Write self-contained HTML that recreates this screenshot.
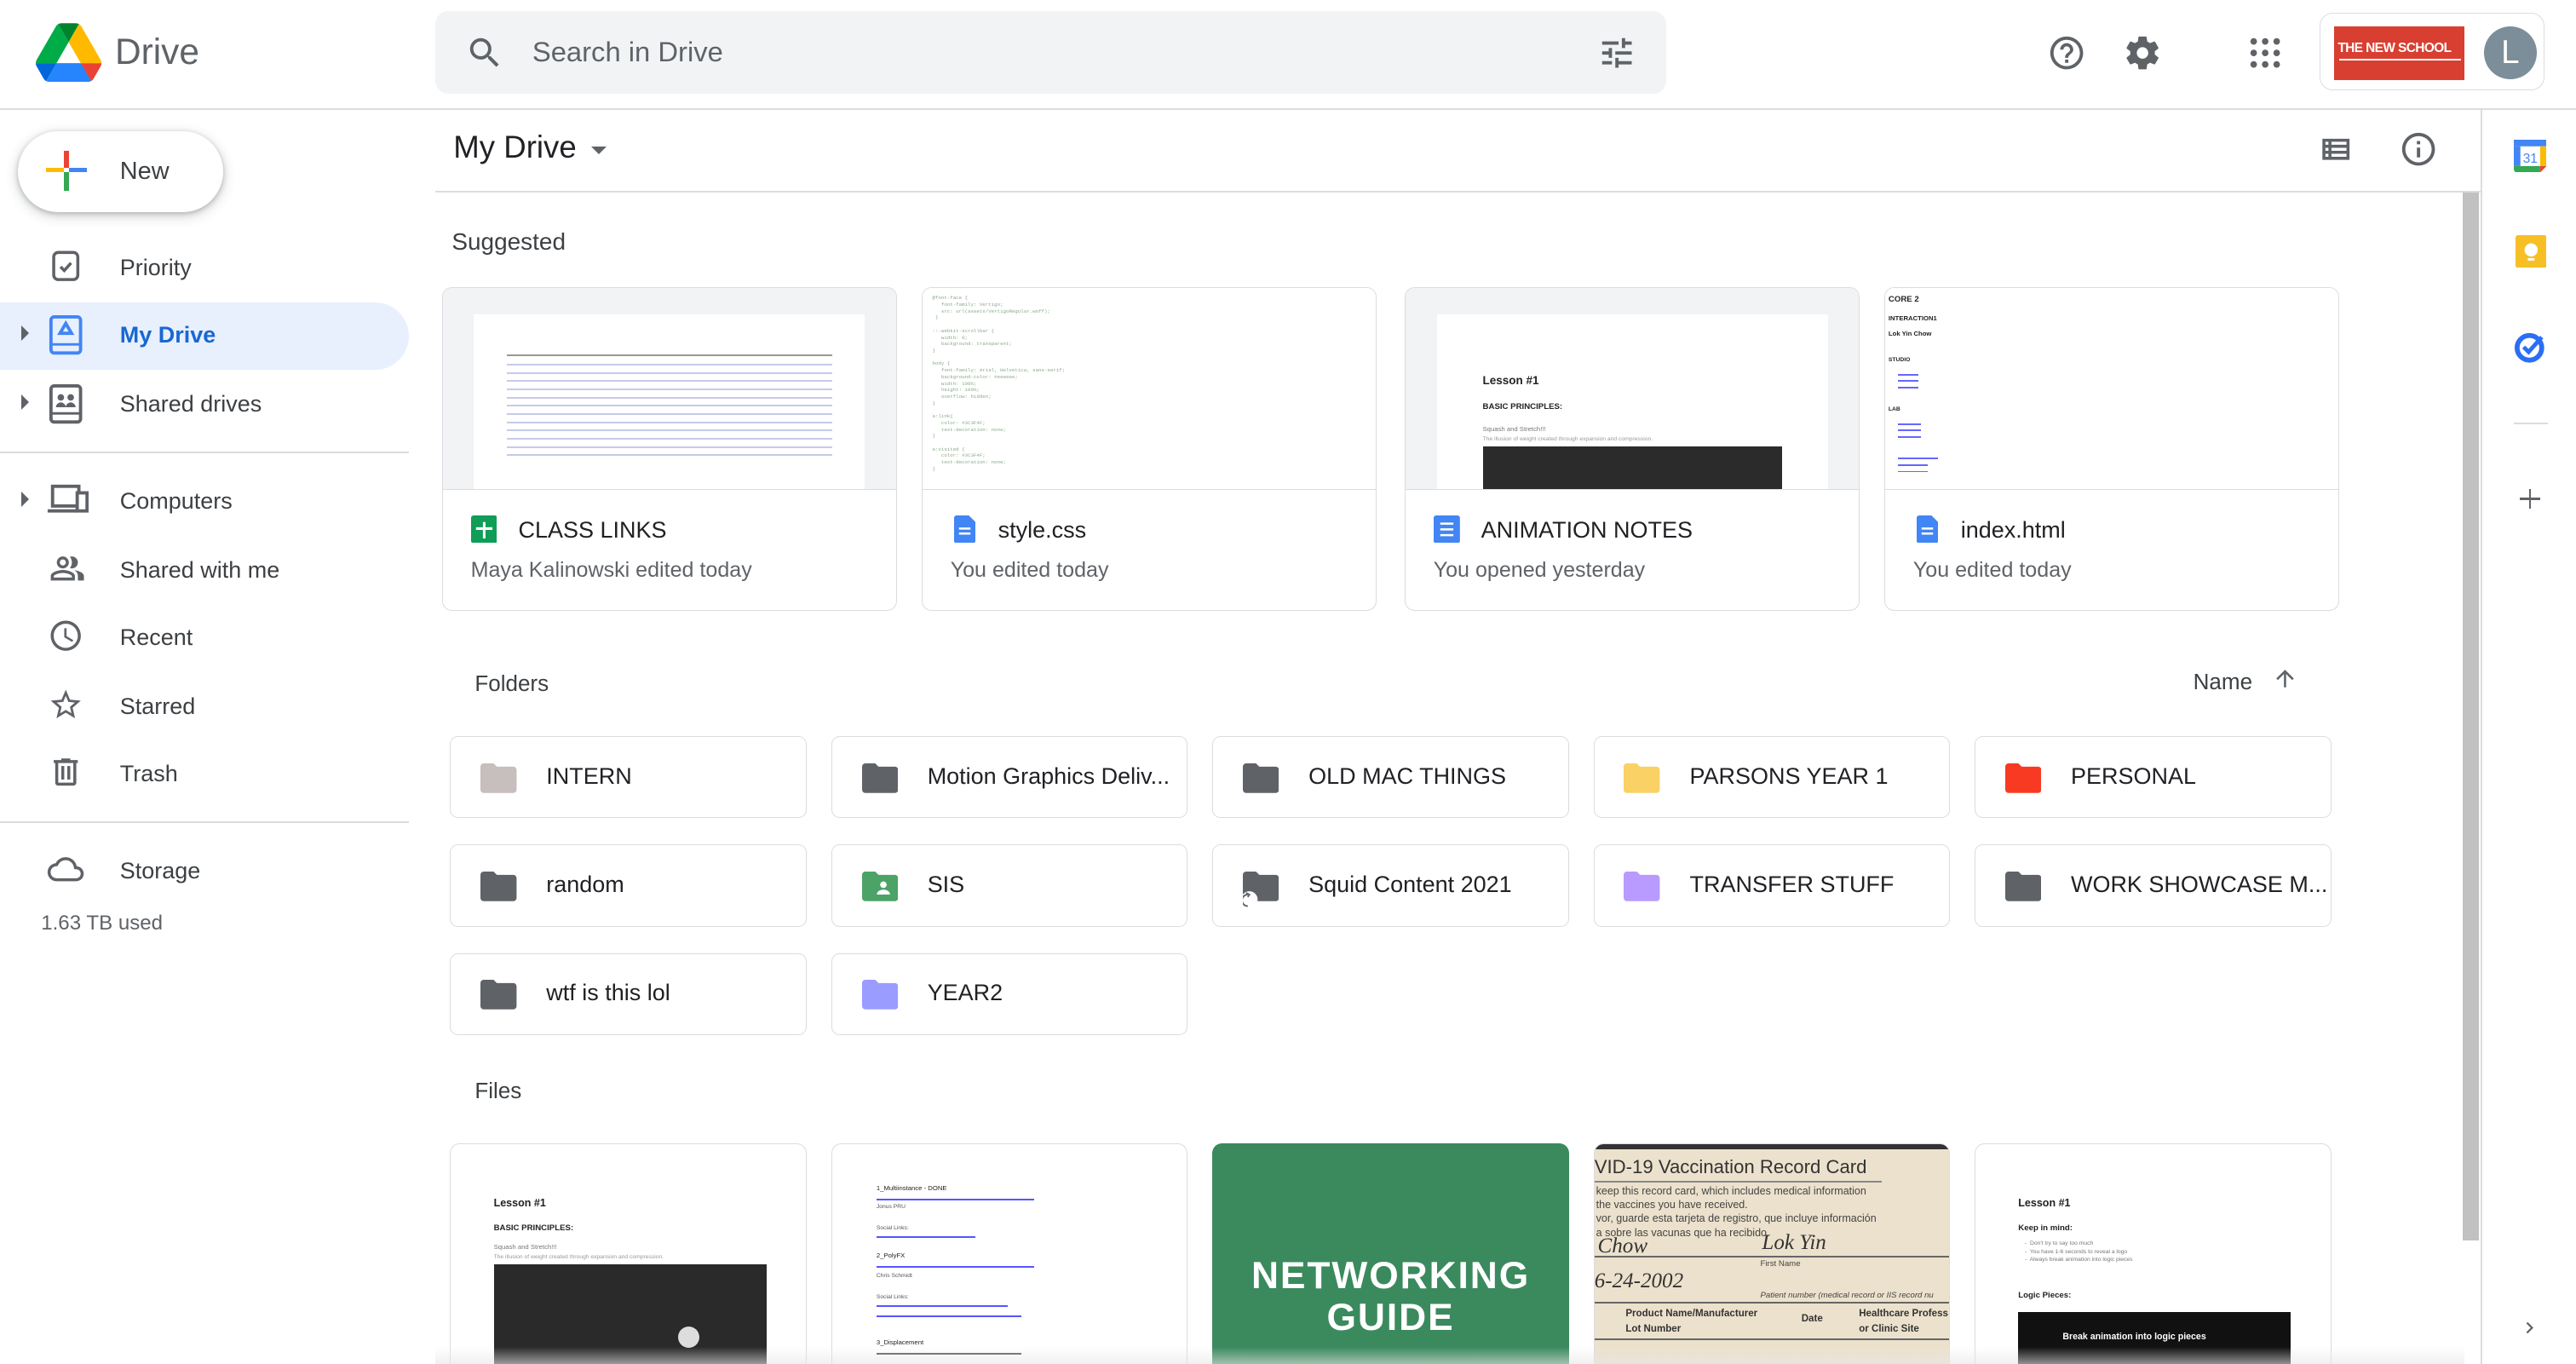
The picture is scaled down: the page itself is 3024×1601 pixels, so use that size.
<!DOCTYPE html>
<html><head><meta charset="utf-8">
<style>
html,body{margin:0;padding:0;background:#fff;overflow:hidden}
body{width:1568px;height:830px;zoom:1.928571;position:relative;font-family:"Liberation Sans",Arial,sans-serif;color:#3c4043}
.a{position:absolute}
.t{position:absolute;white-space:nowrap}
.nav{position:absolute;left:73px;font-size:14px;color:#3c4043}
.ic{position:absolute}
.card{position:absolute;top:175px;width:276px;height:196px;border:1px solid #dadce0;border-radius:6px;overflow:hidden;background:#fff}
.card .pv{position:absolute;left:0;top:0;right:0;height:122px;background:#f1f3f4;border-bottom:1px solid #dadce0;overflow:hidden}
.card .nm{position:absolute;left:46px;top:139px;font-size:14px;color:#202124}
.card .sb{position:absolute;left:17px;top:164px;font-size:13px;color:#5f6368}
.fd{position:absolute;width:216px;height:49px;border:1px solid #dadce0;border-radius:5px;background:#fff}
.fd .n{position:absolute;left:58px;top:16px;font-size:14px;color:#202124;font-weight:500}
.fd svg{position:absolute;left:18px;top:16px}
.fl{position:absolute;top:696px;width:216px;height:140px;border:1px solid #dadce0;border-radius:6px;overflow:hidden;background:#fff}
.doc{position:absolute;background:#fff}
.ln{position:absolute;height:1px;background:#c5cbe8}
</style></head><body>
<!-- header -->
<svg class="ic" style="left:22px;top:14px" width="40" height="36" viewBox="0 0 87.3 78"><path d="m6.6 66.85 3.85 6.65c.8 1.4 1.95 2.5 3.3 3.3l13.75-23.8h-27.5c0 1.55.4 3.1 1.2 4.5z" fill="#0066da"/><path d="m43.65 25-13.75-23.8c-1.35.8-2.5 1.9-3.3 3.3l-25.4 44a9.06 9.06 0 0 0 -1.2 4.5h27.5z" fill="#00ac47"/><path d="m73.55 76.8c1.35-.8 2.5-1.9 3.3-3.3l1.6-2.75 7.65-13.25c.8-1.4 1.2-2.95 1.2-4.5h-27.502l5.852 11.5z" fill="#ea4335"/><path d="m43.65 25 13.75-23.8c-1.35-.8-2.9-1.2-4.5-1.2h-18.5c-1.6 0-3.15.45-4.5 1.2z" fill="#00832d"/><path d="m59.8 53h-32.3l-13.75 23.8c1.35.8 2.9 1.2 4.5 1.2h50.8c1.6 0 3.15-.45 4.5-1.2z" fill="#2684fc"/><path d="m73.4 26.5-12.7-22c-.8-1.4-1.95-2.5-3.3-3.3l-13.75 23.8 16.15 28h27.45c0-1.55-.4-3.1-1.2-4.5z" fill="#ffba00"/></svg>
<div class="t" style="left:70px;top:19px;font-size:22px;color:#5f6368">Drive</div>
<div class="a" style="left:265px;top:7px;width:749px;height:50px;background:#f1f3f4;border-radius:8px"></div>
<svg class="ic" style="left:283px;top:20px" width="24" height="24" viewBox="0 0 24 24"><path fill="#5f6368" d="M15.5 14h-.79l-.28-.27A6.47 6.47 0 0 0 16 9.5 6.5 6.5 0 1 0 9.5 16c1.61 0 3.09-.59 4.23-1.57l.27.28v.79l5 4.99L20.49 19l-4.99-5zm-6 0C7.01 14 5 11.99 5 9.5S7.01 5 9.5 5 14 7.01 14 9.5 11.99 14 9.5 14z"/></svg>
<div class="t" style="left:324px;top:22px;font-size:17px;color:#5f6368">Search in Drive</div>
<svg class="ic" style="left:972px;top:20px" width="24" height="24" viewBox="0 0 24 24"><path fill="#5f6368" d="M3 17v2h6v-2H3zM3 5v2h10V5H3zm10 16v-2h8v-2h-8v-2h-2v6h2zM7 9v2H3v2h4v2h2V9H7zm14 4v-2H11v2h10zm-6-4h2V7h4V5h-4V3h-2v6z"/></svg>
<svg class="ic" style="left:1246px;top:20px" width="24" height="24" viewBox="0 0 24 24"><path fill="#5f6368" d="M11 18h2v-2h-2v2zm1-16C6.48 2 2 6.48 2 12s4.48 10 10 10 10-4.48 10-10S17.52 2 12 2zm0 18c-4.41 0-8-3.59-8-8s3.59-8 8-8 8 3.59 8 8-3.59 8-8 8zm0-14c-2.21 0-4 1.79-4 4h2c0-1.1.9-2 2-2s2 .9 2 2c0 2-3 1.75-3 5h2c0-2.25 3-2.5 3-5 0-2.21-1.79-4-4-4z"/></svg>
<svg class="ic" style="left:1292px;top:20px" width="24" height="24" viewBox="0 0 24 24"><path fill="#5f6368" d="M19.43 12.98c.04-.32.07-.64.07-.98s-.03-.66-.07-.98l2.11-1.65c.19-.15.24-.42.12-.64l-2-3.46c-.12-.22-.39-.3-.61-.22l-2.49 1c-.52-.4-1.08-.73-1.69-.98l-.38-2.65A.49.49 0 0 0 14 2h-4c-.25 0-.46.18-.49.42l-.38 2.65c-.61.25-1.17.59-1.69.98l-2.49-1c-.23-.09-.49 0-.61.22l-2 3.46c-.13.22-.07.49.12.64l2.11 1.65c-.04.32-.07.65-.07.98s.03.66.07.98l-2.11 1.65c-.19.15-.24.42-.12.64l2 3.46c.12.22.39.3.61.22l2.49-1c.52.4 1.08.73 1.69.98l.38 2.65c.03.24.24.42.49.42h4c.25 0 .46-.18.49-.42l.38-2.65c.61-.25 1.17-.59 1.69-.98l2.49 1c.23.09.49 0 .61-.22l2-3.46c.12-.22.07-.49-.12-.64l-2.11-1.65zM12 15.5c-1.93 0-3.5-1.57-3.5-3.5s1.57-3.5 3.5-3.5 3.5 1.57 3.5 3.5-1.57 3.5-3.5 3.5z"/></svg>
<svg class="ic" style="left:1367px;top:20px" width="24" height="24" viewBox="0 0 24 24"><g fill="#5f6368"><circle cx="5" cy="5" r="2"/><circle cx="12" cy="5" r="2"/><circle cx="19" cy="5" r="2"/><circle cx="5" cy="12" r="2"/><circle cx="12" cy="12" r="2"/><circle cx="19" cy="12" r="2"/><circle cx="5" cy="19" r="2"/><circle cx="12" cy="19" r="2"/><circle cx="19" cy="19" r="2"/></g></svg>
<div class="a" style="left:1412px;top:8px;width:136px;height:46px;border:1px solid #dadce0;border-radius:8px"></div>
<div class="a" style="left:1421px;top:16px;width:79px;height:33px;background:#d83f31"></div>
<div class="t" style="left:1423px;top:25px;font-size:8px;font-weight:bold;color:#fff;letter-spacing:-0.3px">THE NEW SCHOOL</div>
<div class="a" style="left:1424px;top:36px;width:74px;height:1px;background:#fff"></div>
<div class="a" style="left:1512px;top:16px;width:32px;height:32px;border-radius:50%;background:#7b8e99;color:#fff;font-size:20px;text-align:center;line-height:32px">L</div>
<div class="a" style="left:0;top:66px;width:1568px;height:1px;background:#dadce0"></div>

<!-- sidebar -->
<div class="a" style="left:11px;top:80px;width:125px;height:49px;border-radius:25px;background:#fff;box-shadow:0 1px 3px rgba(60,64,67,.3),0 2px 6px 2px rgba(60,64,67,.15)"></div>
<div class="a" style="left:39px;top:92px;width:3px;height:10px;background:#ea4335"></div>
<div class="a" style="left:39px;top:105px;width:3px;height:11px;background:#34a853"></div>
<div class="a" style="left:28px;top:102px;width:11px;height:3px;background:#fbbc04"></div>
<div class="a" style="left:42px;top:102px;width:11px;height:3px;background:#4285f4"></div>
<div class="t" style="left:73px;top:96px;font-size:15px;color:#3c4043;font-weight:500">New</div>

<div class="a" style="left:0;top:184px;width:249px;height:41px;background:#e8f0fe;border-radius:0 21px 21px 0"></div>
<svg class="ic" style="left:29px;top:151px" width="22" height="22" viewBox="0 0 24 24"><rect x="4" y="3" width="16" height="18" rx="3" fill="none" stroke="#5f6368" stroke-width="2"/><path d="M8.5 12.5l2.5 2.5 4.5-5" fill="none" stroke="#5f6368" stroke-width="2"/></svg>
<div class="nav" style="top:155px">Priority</div>
<div class="a" style="left:13px;top:198px;width:0;height:0;border-top:5px solid transparent;border-bottom:5px solid transparent;border-left:5px solid #5f6368"></div>
<svg class="ic" style="left:29px;top:192px" width="22" height="24" viewBox="0 0 22 24"><rect x="2" y="1" width="18" height="22" rx="2" fill="none" stroke="#4285f4" stroke-width="2"/><rect x="2" y="17" width="18" height="1.5" fill="#4285f4"/><path d="M11 5l3.5 6h-7z" fill="none" stroke="#4285f4" stroke-width="2"/></svg>
<div class="nav" style="top:196px;color:#1967d2;font-weight:bold">My Drive</div>
<div class="a" style="left:13px;top:240px;width:0;height:0;border-top:5px solid transparent;border-bottom:5px solid transparent;border-left:5px solid #5f6368"></div>
<svg class="ic" style="left:29px;top:234px" width="22" height="24" viewBox="0 0 22 24"><rect x="2" y="1" width="18" height="22" rx="2" fill="none" stroke="#5f6368" stroke-width="2"/><rect x="2" y="17" width="18" height="1.5" fill="#5f6368"/><circle cx="8" cy="8" r="2" fill="#5f6368"/><circle cx="14" cy="8" r="2" fill="#5f6368"/><path d="M5 14c0-2 2-3 3-3s3 1 3 3zM11 14c0-2 2-3 3-3s3 1 3 3z" fill="#5f6368"/></svg>
<div class="nav" style="top:238px">Shared drives</div>
<div class="a" style="left:0;top:275px;width:249px;height:1px;background:#dadce0"></div>
<div class="a" style="left:13px;top:299px;width:0;height:0;border-top:5px solid transparent;border-bottom:5px solid transparent;border-left:5px solid #5f6368"></div>
<svg class="ic" style="left:28px;top:293px" width="26" height="22" viewBox="0 0 26 22"><rect x="4" y="3" width="16" height="12" fill="none" stroke="#5f6368" stroke-width="2"/><path d="M1 18h18" stroke="#5f6368" stroke-width="2"/><rect x="19" y="7" width="6" height="11" fill="#fff" stroke="#5f6368" stroke-width="2"/></svg>
<div class="nav" style="top:297px">Computers</div>
<svg class="ic" style="left:28px;top:335px" width="26" height="22" viewBox="0 0 24 24"><path fill="#5f6368" d="M16.67 13.13C18.04 14.06 19 15.32 19 17v3h4v-3c0-2.18-3.57-3.47-6.33-3.87zM15 12c2.21 0 4-1.79 4-4s-1.79-4-4-4c-.47 0-.91.1-1.33.24a5.98 5.98 0 0 1 0 7.52c.42.14.86.24 1.33.24zm-6 0c2.21 0 4-1.79 4-4s-1.79-4-4-4-4 1.79-4 4 1.79 4 4 4zm0-6c1.1 0 2 .9 2 2s-.9 2-2 2-2-.9-2-2 .9-2 2-2zm0 7c-2.67 0-8 1.34-8 4v3h16v-3c0-2.66-5.33-4-8-4zm6 5H3v-.99C3.2 16.29 6.3 15 9 15s5.8 1.29 6 2v1z"/></svg>
<div class="nav" style="top:339px">Shared with me</div>
<svg class="ic" style="left:29px;top:376px" width="22" height="22" viewBox="0 0 24 24"><path fill="#5f6368" d="M11.99 2C6.47 2 2 6.48 2 12s4.47 10 9.99 10C17.52 22 22 17.52 22 12S17.52 2 11.99 2zM12 20c-4.42 0-8-3.58-8-8s3.58-8 8-8 8 3.58 8 8-3.58 8-8 8zm.5-13H11v6l5.25 3.15.75-1.23-4.5-2.67z"/></svg>
<div class="nav" style="top:380px">Recent</div>
<svg class="ic" style="left:29px;top:418px" width="22" height="22" viewBox="0 0 24 24"><path fill="#5f6368" d="M22 9.24l-7.19-.62L12 2 9.19 8.63 2 9.24l5.46 4.73L5.82 21 12 17.27 18.18 21l-1.63-7.03L22 9.24zM12 15.4l-3.76 2.27 1-4.28-3.32-2.88 4.38-.38L12 6.1l1.71 4.04 4.38.38-3.32 2.88 1 4.28L12 15.4z"/></svg>
<div class="nav" style="top:422px">Starred</div>
<svg class="ic" style="left:29px;top:459px" width="22" height="22" viewBox="0 0 24 24"><path fill="#5f6368" d="M15 4V3H9v1H4v2h1v13c0 1.1.9 2 2 2h10c1.1 0 2-.9 2-2V6h1V4h-5zm2 15H7V6h10v13zM9 8h2v9H9zm4 0h2v9h-2z"/></svg>
<div class="nav" style="top:463px">Trash</div>
<div class="a" style="left:0;top:500px;width:249px;height:1px;background:#dadce0"></div>
<svg class="ic" style="left:27px;top:518px" width="26" height="22" viewBox="0 0 24 24"><path fill="#5f6368" d="M19.35 10.04A7.49 7.49 0 0 0 12 4C9.11 4 6.6 5.64 5.35 8.04A5.994 5.994 0 0 0 0 14c0 3.31 2.69 6 6 6h13c2.76 0 5-2.24 5-5 0-2.64-2.05-4.78-4.65-4.96zM19 18H6c-2.21 0-4-1.79-4-4 0-2.05 1.53-3.76 3.56-3.97l1.07-.11.5-.95A5.469 5.469 0 0 1 12 6c2.62 0 4.88 1.86 5.39 4.43l.3 1.5 1.53.11A2.98 2.98 0 0 1 22 15c0 1.65-1.35 3-3 3z"/></svg>
<div class="nav" style="top:522px">Storage</div>
<div class="t" style="left:25px;top:555px;font-size:12.5px;color:#5f6368">1.63 TB used</div>

<!-- main header -->
<div class="t" style="left:276px;top:79px;font-size:19px;color:#202124">My Drive</div>
<div class="a" style="left:360px;top:89px;width:0;height:0;border-left:5px solid transparent;border-right:5px solid transparent;border-top:5px solid #5f6368"></div>
<svg class="ic" style="left:1411px;top:80px" width="22" height="22" viewBox="0 0 24 24"><path fill="#5f6368" d="M3 5v14h18V5H3zm4 2v2H5V7h2zm-2 6v-2h2v2H5zm0 2h2v2H5v-2zm14 2H9v-2h10v2zm0-4H9v-2h10v2zm0-4H9V7h10v2z"/></svg>
<svg class="ic" style="left:1460px;top:79px" width="24" height="24" viewBox="0 0 24 24"><path fill="#5f6368" d="M11 7h2v2h-2zm0 4h2v6h-2zm1-9C6.48 2 2 6.48 2 12s4.48 10 10 10 10-4.48 10-10S17.52 2 12 2zm0 18c-4.41 0-8-3.59-8-8s3.59-8 8-8 8 3.59 8 8-3.59 8-8 8z"/></svg>
<div class="a" style="left:265px;top:116px;width:1245px;height:1px;background:#dadce0"></div>
<div class="a" style="left:1510px;top:66px;width:1px;height:764px;background:#dadce0"></div>
<div class="a" style="left:1499px;top:117px;width:10px;height:638px;background:#c1c1c1"></div>

<div class="t" style="left:275px;top:139px;font-size:14.5px;color:#3c4043">Suggested</div>

<!-- suggested cards -->
<div class="card" style="left:269px">
  <div class="pv"><div class="doc" style="left:19px;top:16px;width:238px;height:110px">
    <div class="ln" style="left:20px;top:24px;width:198px;background:#999"></div>
    <div class="ln" style="left:20px;top:30px;width:198px"></div><div class="ln" style="left:20px;top:35px;width:198px"></div><div class="ln" style="left:20px;top:40px;width:198px"></div><div class="ln" style="left:20px;top:45px;width:198px"></div><div class="ln" style="left:20px;top:50px;width:198px"></div><div class="ln" style="left:20px;top:55px;width:198px"></div><div class="ln" style="left:20px;top:60px;width:198px"></div><div class="ln" style="left:20px;top:65px;width:198px"></div><div class="ln" style="left:20px;top:70px;width:198px"></div><div class="ln" style="left:20px;top:75px;width:198px"></div><div class="ln" style="left:20px;top:80px;width:198px"></div><div class="ln" style="left:20px;top:85px;width:198px"></div>
  </div></div>
  <svg class="ic" style="left:17px;top:138px" width="16" height="17" viewBox="0 0 16 17"><rect width="16" height="17" rx="1.5" fill="#0f9d58"/><path d="M3 8h10M8 4v10" stroke="#fff" stroke-width="1.6"/></svg>
  <div class="nm">CLASS LINKS</div><div class="sb">Maya Kalinowski edited today</div>
</div>
<div class="card" style="left:561px">
  <div class="pv" style="background:#fff"><div style="position:absolute;left:6px;top:4px;font:3px 'Liberation Mono',monospace;color:#8a8;line-height:4px;white-space:pre">@font-face {
   font-family: Vertigo;
   src: url(assets/VertigoRegular.woff);
 }

::-webkit-scrollbar {
   width: 0;
   background: transparent;
}

body {
   font-family: Arial, Helvetica, sans-serif;
   background-color: #eeeeee;
   width: 100%;
   height: 100%;
   overflow: hidden;
}

a:link{
   color: #3C3F4F;
   text-decoration: none;
}

a:visited {
   color: #3C3F4F;
   text-decoration: none;
}</div></div>
  <svg class="ic" style="left:19px;top:138px" width="13" height="17" viewBox="0 0 13 17"><path d="M0 1.5A1.5 1.5 0 0 1 1.5 0H9l4 4v11.5A1.5 1.5 0 0 1 11.5 17h-10A1.5 1.5 0 0 1 0 15.5z" fill="#4285f4"/><path d="M3 8h7M3 11h7" stroke="#fff" stroke-width="1.3"/></svg>
  <div class="nm">style.css</div><div class="sb">You edited today</div>
</div>
<div class="card" style="left:855px">
  <div class="pv"><div class="doc" style="left:19px;top:16px;width:238px;height:110px">
    <div class="t" style="left:28px;top:36px;font-size:7px;font-weight:bold;color:#222">Lesson #1</div>
    <div class="t" style="left:28px;top:53px;font-size:5px;font-weight:bold;color:#222">BASIC PRINCIPLES:</div>
    <div class="t" style="left:28px;top:67px;font-size:4px;color:#777">Squash and Stretch!!!</div>
    <div class="t" style="left:28px;top:74px;font-size:3.5px;color:#999">The illusion of weight created through expansion and compression.</div>
    <div class="a" style="left:28px;top:80px;width:182px;height:30px;background:#2b2b2b"></div>
  </div></div>
  <svg class="ic" style="left:17px;top:138px" width="16" height="17" viewBox="0 0 16 17"><rect width="16" height="17" rx="1.5" fill="#4285f4"/><path d="M4 5h8M4 8.5h8M4 12h8" stroke="#fff" stroke-width="1.3"/></svg>
  <div class="nm">ANIMATION NOTES</div><div class="sb">You opened yesterday</div>
</div>
<div class="card" style="left:1147px">
  <div class="pv" style="background:#fff">
    <div class="t" style="left:2px;top:4px;font-size:5px;font-weight:bold;color:#222">CORE 2</div>
    <div class="t" style="left:2px;top:16px;font-size:4px;font-weight:bold;color:#222">INTERACTION1</div>
    <div class="t" style="left:2px;top:25px;font-size:4px;font-weight:bold;color:#222">Lok Yin Chow</div>
    <div class="t" style="left:2px;top:42px;font-size:3.5px;font-weight:bold;color:#222">STUDIO</div>
    <div class="ln" style="left:8px;top:52px;width:12px;background:#66f"></div><div class="ln" style="left:8px;top:56px;width:12px;background:#66f"></div><div class="ln" style="left:8px;top:60px;width:12px;background:#66f"></div>
    <div class="t" style="left:2px;top:72px;font-size:3.5px;font-weight:bold;color:#222">LAB</div>
    <div class="ln" style="left:8px;top:82px;width:14px;background:#66f"></div><div class="ln" style="left:8px;top:86px;width:14px;background:#66f"></div><div class="ln" style="left:8px;top:90px;width:14px;background:#66f"></div>
    <div class="ln" style="left:8px;top:103px;width:24px;background:#66f"></div><div class="ln" style="left:8px;top:107px;width:18px;background:#66f"></div><div class="ln" style="left:8px;top:111px;width:18px;background:#66f"></div>
  </div>
  <svg class="ic" style="left:19px;top:138px" width="13" height="17" viewBox="0 0 13 17"><path d="M0 1.5A1.5 1.5 0 0 1 1.5 0H9l4 4v11.5A1.5 1.5 0 0 1 11.5 17h-10A1.5 1.5 0 0 1 0 15.5z" fill="#4285f4"/><path d="M3 8h7M3 11h7" stroke="#fff" stroke-width="1.3"/></svg>
  <div class="nm">index.html</div><div class="sb">You edited today</div>
</div>

<!-- folders -->
<div class="t" style="left:289px;top:408px;font-size:13.5px;color:#3c4043">Folders</div>
<div class="t" style="left:1335px;top:407px;font-size:13.5px;color:#3c4043">Name</div>
<svg class="ic" style="left:1383px;top:405px" width="16" height="16" viewBox="0 0 24 24"><path fill="#5f6368" d="M4 12l1.41 1.41L11 7.83V20h2V7.83l5.58 5.59L20 12l-8-8-8 8z"/></svg>

<div class="fd" style="left:274px;top:448px"><svg width="22" height="18" viewBox="0 0 22 18"><path d="M0 2a2 2 0 0 1 2-2h6l2 2h10a2 2 0 0 1 2 2v12a2 2 0 0 1-2 2H2a2 2 0 0 1-2-2z" fill="#c7bebe"/></svg><div class="n">INTERN</div></div>
<div class="fd" style="left:506px;top:448px"><svg width="22" height="18" viewBox="0 0 22 18"><path d="M0 2a2 2 0 0 1 2-2h6l2 2h10a2 2 0 0 1 2 2v12a2 2 0 0 1-2 2H2a2 2 0 0 1-2-2z" fill="#5f6368"/></svg><div class="n">Motion Graphics Deliv...</div></div>
<div class="fd" style="left:738px;top:448px"><svg width="22" height="18" viewBox="0 0 22 18"><path d="M0 2a2 2 0 0 1 2-2h6l2 2h10a2 2 0 0 1 2 2v12a2 2 0 0 1-2 2H2a2 2 0 0 1-2-2z" fill="#5f6368"/></svg><div class="n">OLD MAC THINGS</div></div>
<div class="fd" style="left:970px;top:448px"><svg width="22" height="18" viewBox="0 0 22 18"><path d="M0 2a2 2 0 0 1 2-2h6l2 2h10a2 2 0 0 1 2 2v12a2 2 0 0 1-2 2H2a2 2 0 0 1-2-2z" fill="#fad165"/></svg><div class="n">PARSONS YEAR 1</div></div>
<div class="fd" style="left:1202px;top:448px"><svg width="22" height="18" viewBox="0 0 22 18"><path d="M0 2a2 2 0 0 1 2-2h6l2 2h10a2 2 0 0 1 2 2v12a2 2 0 0 1-2 2H2a2 2 0 0 1-2-2z" fill="#f83a22"/></svg><div class="n">PERSONAL</div></div>

<div class="fd" style="left:274px;top:514px"><svg width="22" height="18" viewBox="0 0 22 18"><path d="M0 2a2 2 0 0 1 2-2h6l2 2h10a2 2 0 0 1 2 2v12a2 2 0 0 1-2 2H2a2 2 0 0 1-2-2z" fill="#5f6368"/></svg><div class="n">random</div></div>
<div class="fd" style="left:506px;top:514px"><svg width="22" height="18" viewBox="0 0 22 18"><path d="M0 2a2 2 0 0 1 2-2h6l2 2h10a2 2 0 0 1 2 2v12a2 2 0 0 1-2 2H2a2 2 0 0 1-2-2z" fill="#4ba367"/><circle cx="13" cy="8" r="2" fill="#fff"/><path d="M9 14c0-2 2-3 4-3s4 1 4 3z" fill="#fff"/></svg><div class="n">SIS</div></div>
<div class="fd" style="left:738px;top:514px"><svg width="22" height="22" viewBox="0 0 22 22"><path d="M0 2a2 2 0 0 1 2-2h6l2 2h10a2 2 0 0 1 2 2v12a2 2 0 0 1-2 2H2a2 2 0 0 1-2-2z" fill="#5f6368"/><circle cx="4" cy="17" r="5" fill="#fff"/><path d="M3 14a3 3 0 0 0 0 7" fill="none" stroke="#5f6368" stroke-width="1"/><path d="M2 13l2 1-1 1.5" fill="none" stroke="#5f6368" stroke-width="1"/></svg><div class="n">Squid Content 2021</div></div>
<div class="fd" style="left:970px;top:514px"><svg width="22" height="18" viewBox="0 0 22 18"><path d="M0 2a2 2 0 0 1 2-2h6l2 2h10a2 2 0 0 1 2 2v12a2 2 0 0 1-2 2H2a2 2 0 0 1-2-2z" fill="#b99aff"/></svg><div class="n">TRANSFER STUFF</div></div>
<div class="fd" style="left:1202px;top:514px"><svg width="22" height="18" viewBox="0 0 22 18"><path d="M0 2a2 2 0 0 1 2-2h6l2 2h10a2 2 0 0 1 2 2v12a2 2 0 0 1-2 2H2a2 2 0 0 1-2-2z" fill="#5f6368"/></svg><div class="n">WORK SHOWCASE M...</div></div>

<div class="fd" style="left:274px;top:580px"><svg width="22" height="18" viewBox="0 0 22 18"><path d="M0 2a2 2 0 0 1 2-2h6l2 2h10a2 2 0 0 1 2 2v12a2 2 0 0 1-2 2H2a2 2 0 0 1-2-2z" fill="#5f6368"/></svg><div class="n">wtf is this lol</div></div>
<div class="fd" style="left:506px;top:580px"><svg width="22" height="18" viewBox="0 0 22 18"><path d="M0 2a2 2 0 0 1 2-2h6l2 2h10a2 2 0 0 1 2 2v12a2 2 0 0 1-2 2H2a2 2 0 0 1-2-2z" fill="#9a9cff"/></svg><div class="n">YEAR2</div></div>

<!-- files -->
<div class="t" style="left:289px;top:656px;font-size:13.5px;color:#3c4043">Files</div>
<div class="fl" style="left:274px">
  <div class="t" style="left:26px;top:32px;font-size:6.5px;font-weight:bold;color:#222">Lesson #1</div>
  <div class="t" style="left:26px;top:48px;font-size:5px;font-weight:bold;color:#222">BASIC PRINCIPLES:</div>
  <div class="t" style="left:26px;top:60px;font-size:4px;color:#777">Squash and Stretch!!!</div>
  <div class="t" style="left:26px;top:67px;font-size:3.5px;color:#999">The illusion of weight created through expansion and compression.</div>
  <div class="a" style="left:26px;top:73px;width:166px;height:70px;background:#2a2a2a"></div>
  <div class="a" style="left:138px;top:111px;width:13px;height:13px;border-radius:50%;background:#ddd"></div>
</div>
<div class="fl" style="left:506px">
  <div class="t" style="left:27px;top:24px;font-size:4px;color:#222">1_Multiinstance - DONE</div>
  <div class="ln" style="left:27px;top:33px;width:96px;background:#55f"></div>
  <div class="t" style="left:27px;top:36px;font-size:3.5px;color:#555">Jonus PRU</div>
  <div class="t" style="left:27px;top:49px;font-size:3.5px;color:#555">Social Links:</div>
  <div class="ln" style="left:27px;top:56px;width:60px;background:#55f"></div>
  <div class="t" style="left:27px;top:65px;font-size:4px;color:#222">2_PolyFX</div>
  <div class="ln" style="left:27px;top:74px;width:96px;background:#55f"></div>
  <div class="t" style="left:27px;top:78px;font-size:3.5px;color:#555">Chris Schmidt</div>
  <div class="t" style="left:27px;top:91px;font-size:3.5px;color:#555">Social Links:</div>
  <div class="ln" style="left:27px;top:98px;width:80px;background:#55f"></div>
  <div class="ln" style="left:27px;top:104px;width:88px;background:#55f"></div>
  <div class="t" style="left:27px;top:118px;font-size:4px;color:#222">3_Displacement</div>
  <div class="ln" style="left:27px;top:127px;width:88px;background:#555"></div>
</div>
<div class="fl" style="left:738px;background:#3a8a5e;border-color:#3a8a5e">
  <div class="a" style="left:0;top:68px;width:216px;text-align:center;font-size:23px;font-weight:bold;color:#fff;line-height:25px;letter-spacing:1px">NETWORKING<br>GUIDE</div>
</div>
<div class="fl" style="left:970px;background:#ece1cc">
  <div class="a" style="left:0;top:0;width:216px;height:3px;background:#333"></div>
  <div class="t" style="left:0;top:7px;font-size:11.5px;color:#333">VID-19 Vaccination Record Card</div>
  <div class="a" style="left:0;top:22px;width:175px;height:1px;background:#888"></div>
  <div class="t" style="left:1px;top:24px;font-size:6.5px;line-height:8.5px;color:#444">keep this record card, which includes medical information<br>the vaccines you have received.<br>vor, guarde esta tarjeta de registro, que incluye información<br>a sobre las vacunas que ha recibido.</div>
  <div class="t" style="left:2px;top:55px;font-size:13px;font-style:italic;color:#333;font-family:'Liberation Serif',serif">Chow</div>
  <div class="t" style="left:102px;top:53px;font-size:13px;font-style:italic;color:#333;font-family:'Liberation Serif',serif">Lok Yin</div>
  <div class="a" style="left:0;top:68px;width:216px;height:1px;background:#666"></div>
  <div class="t" style="left:101px;top:70px;font-size:5px;color:#444">First Name</div>
  <div class="t" style="left:0;top:76px;font-size:13px;font-style:italic;color:#333;font-family:'Liberation Serif',serif">6-24-2002</div>
  <div class="t" style="left:101px;top:89px;font-size:5px;color:#444;font-style:italic">Patient number (medical record or IIS record nu</div>
  <div class="a" style="left:0;top:96px;width:216px;height:1px;background:#666"></div>
  <div class="t" style="left:19px;top:99px;font-size:6px;font-weight:bold;line-height:9px;color:#333">Product Name/Manufacturer<br>Lot Number</div>
  <div class="t" style="left:126px;top:103px;font-size:6px;font-weight:bold;color:#333">Date</div>
  <div class="t" style="left:161px;top:99px;font-size:6px;font-weight:bold;line-height:9px;color:#333">Healthcare Profess<br>or Clinic Site</div>
  <div class="a" style="left:0;top:118px;width:216px;height:1px;background:#666"></div>
</div>
<div class="fl" style="left:1202px">
  <div class="t" style="left:26px;top:32px;font-size:6.5px;font-weight:bold;color:#222">Lesson #1</div>
  <div class="t" style="left:26px;top:48px;font-size:5px;font-weight:bold;color:#222">Keep in mind:</div>
  <div class="t" style="left:30px;top:58px;font-size:3.5px;line-height:5px;color:#777">-&nbsp; Don't try to say too much<br>-&nbsp; You have 1-6 seconds to reveal a logo<br>-&nbsp; Always break animation into logic pieces</div>
  <div class="t" style="left:26px;top:89px;font-size:5px;font-weight:bold;color:#222">Logic Pieces:</div>
  <div class="a" style="left:26px;top:102px;width:166px;height:40px;background:#111"></div>
  <div class="t" style="left:53px;top:114px;font-size:5.5px;font-weight:bold;color:#fff">Break animation into logic pieces</div>
</div>
<div class="a" style="left:265px;top:820px;width:1235px;height:10px;background:linear-gradient(rgba(255,255,255,0),rgba(230,230,230,.6))"></div>

<!-- right rail -->
<svg class="ic" style="left:1530px;top:85px" width="20" height="20" viewBox="0 0 20 20"><rect width="20" height="20" rx="1.5" fill="#fff"/><path d="M0 0h20v4H0z" fill="#4285f4"/><path d="M0 16h16v4H2a2 2 0 0 1-2-2z" fill="#34a853"/><path d="M16 4h4v12h-4z" fill="#fbbc04"/><path d="M0 4h4v12H0z" fill="#4285f4"/><path d="M16 16h4l-4 4z" fill="#ea4335"/><text x="10" y="14" font-size="8" text-anchor="middle" fill="#4285f4" font-family="Liberation Sans">31</text></svg>
<svg class="ic" style="left:1531px;top:143px" width="19" height="20" viewBox="0 0 19 20"><rect width="19" height="20" rx="1.5" fill="#f6bf26"/><circle cx="9.5" cy="9" r="4" fill="#fff"/><rect x="7.5" y="14" width="4" height="1.5" fill="#fff"/></svg>
<svg class="ic" style="left:1530px;top:201px" width="20" height="20" viewBox="0 0 20 20"><circle cx="9.5" cy="10.5" r="7.5" fill="none" stroke="#2a6ef5" stroke-width="3"/><path d="M6 10l3 3 8-9" fill="none" stroke="#2a6ef5" stroke-width="2.5"/></svg>
<div class="a" style="left:1530px;top:257px;width:21px;height:1px;background:#dadce0"></div>
<div class="a" style="left:1534px;top:303px;width:12px;height:1.3px;background:#5f6368"></div>
<div class="a" style="left:1539.4px;top:297.5px;width:1.3px;height:12px;background:#5f6368"></div>
<svg class="ic" style="left:1533px;top:801px" width="14" height="14" viewBox="0 0 24 24"><path fill="#5f6368" d="M8.59 16.59L13.17 12 8.59 7.41 10 6l6 6-6 6z"/></svg>
</body></html>
